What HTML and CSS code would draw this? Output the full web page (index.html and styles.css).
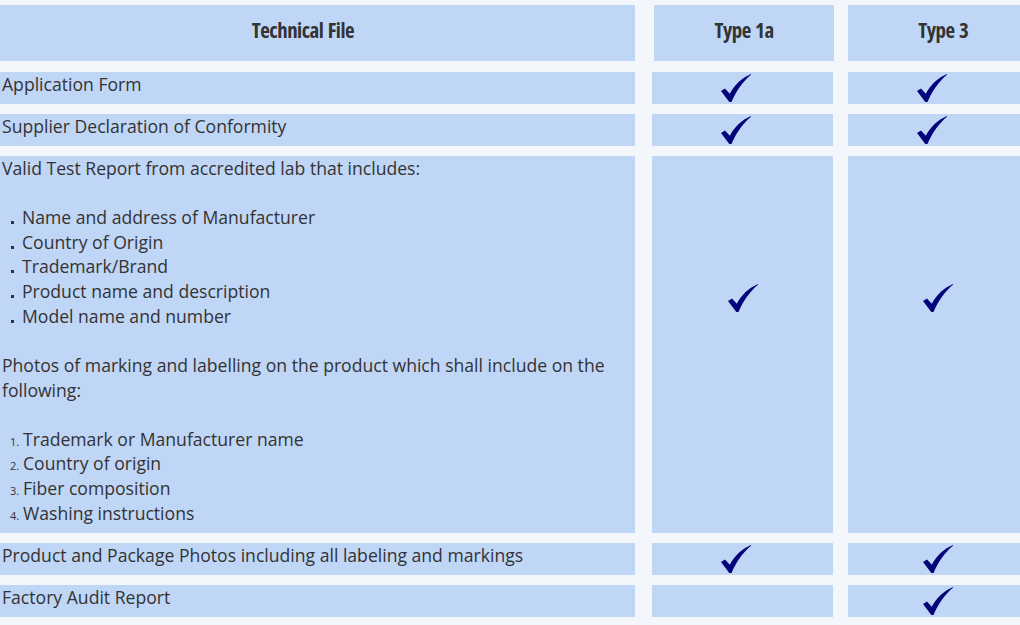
FILE: index.html
```html
<!DOCTYPE html>
<html lang="en">
<head>
<meta charset="utf-8">
<title>Technical File</title>
<link rel="stylesheet" href="styles.css">
</head>
<body>
<div class="table">
  <div class="cell head first"><span class="head-text">Technical File</span></div>
  <div class="cell head mid"><span class="head-text">Type 1a</span></div>
  <div class="cell head last"><span class="head-text">Type 3</span></div>

  <div class="cell text">Application Form</div>
  <div class="cell check mid"><svg class="tick" viewBox="0 0 30 28"><path d="M0 17 L4 14.5 L8.8 19.8 C13.5 11 20.5 4 30 0 L30 0.8 C22 7.5 15.5 16.5 10.5 28 L8.3 28 Z"/></svg></div>
  <div class="cell check"><svg class="tick" viewBox="0 0 30 28"><path d="M0 17 L4 14.5 L8.8 19.8 C13.5 11 20.5 4 30 0 L30 0.8 C22 7.5 15.5 16.5 10.5 28 L8.3 28 Z"/></svg></div>

  <div class="cell text">Supplier Declaration of Conformity</div>
  <div class="cell check mid"><svg class="tick" viewBox="0 0 30 28"><path d="M0 17 L4 14.5 L8.8 19.8 C13.5 11 20.5 4 30 0 L30 0.8 C22 7.5 15.5 16.5 10.5 28 L8.3 28 Z"/></svg></div>
  <div class="cell check"><svg class="tick" viewBox="0 0 30 28"><path d="M0 17 L4 14.5 L8.8 19.8 C13.5 11 20.5 4 30 0 L30 0.8 C22 7.5 15.5 16.5 10.5 28 L8.3 28 Z"/></svg></div>

  <div class="cell text">
    <p>Valid Test Report from accredited lab that includes:</p>
    <ul class="dots">
      <li>Name and address of Manufacturer</li>
      <li>Country of Origin</li>
      <li>Trademark/Brand</li>
      <li>Product name and description</li>
      <li>Model name and number</li>
    </ul>
    <p>Photos of marking and labelling on the product which shall include on the following:</p>
    <ol class="nums">
      <li>Trademark or Manufacturer name</li>
      <li>Country of origin</li>
      <li>Fiber composition</li>
      <li>Washing instructions</li>
    </ol>
  </div>
  <div class="cell check mid tall wide2"><svg class="tick" viewBox="0 0 30 28"><path d="M0 17 L4 14.5 L8.8 19.8 C13.5 11 20.5 4 30 0 L30 0.8 C22 7.5 15.5 16.5 10.5 28 L8.3 28 Z"/></svg></div>
  <div class="cell check tall wide3"><svg class="tick" viewBox="0 0 30 28"><path d="M0 17 L4 14.5 L8.8 19.8 C13.5 11 20.5 4 30 0 L30 0.8 C22 7.5 15.5 16.5 10.5 28 L8.3 28 Z"/></svg></div>

  <div class="cell text">Product and Package Photos including all labeling and markings</div>
  <div class="cell check mid"><svg class="tick" viewBox="0 0 30 28"><path d="M0 17 L4 14.5 L8.8 19.8 C13.5 11 20.5 4 30 0 L30 0.8 C22 7.5 15.5 16.5 10.5 28 L8.3 28 Z"/></svg></div>
  <div class="cell check wide3"><svg class="tick" viewBox="0 0 30 28"><path d="M0 17 L4 14.5 L8.8 19.8 C13.5 11 20.5 4 30 0 L30 0.8 C22 7.5 15.5 16.5 10.5 28 L8.3 28 Z"/></svg></div>

  <div class="cell text">Factory Audit Report</div>
  <div class="cell check mid"></div>
  <div class="cell check wide3"><svg class="tick" viewBox="0 0 30 28"><path d="M0 17 L4 14.5 L8.8 19.8 C13.5 11 20.5 4 30 0 L30 0.8 C22 7.5 15.5 16.5 10.5 28 L8.3 28 Z"/></svg></div>
</div>
</body>
</html>
```

FILE: styles.css
```css
html, body {
  margin: 0;
  padding: 0;
  background: #f3f6fb;
}

body {
  padding-top: 5px;
  font-family: "Open Sans", "DejaVu Sans", sans-serif;
  color: #333333;
}

.table {
  display: grid;
  grid-template-columns: 635px 183px 1fr;
  column-gap: 15px;
  row-gap: 10px;
}

.cell {
  background: #c0d6f6;
}

.cell.mid {
  margin-left: 2px;
}

.head {
  height: 56px;
  margin-bottom: 1px;
  display: flex;
  align-items: center;
  justify-content: center;
  padding-bottom: 8px;
  box-sizing: border-box;
}

.head.first {
  padding-right: 30px;
}

.head.mid {
  margin-left: 4px;
  margin-right: -1px;
}

.head.last {
  margin-right: -18px;
}

.head-text {
  display: inline-block;
  font-size: 22px;
  font-weight: 700;
  font-stretch: 75%;
  color: #333333;
  letter-spacing: -0.5px;
  word-spacing: 1px;
  transform: scaleX(0.95);
}

.text {
  font-size: 17.6px;
  line-height: 1.4;
  padding: 0 2px 7.36px 2px;
}

.text p {
  margin: 0 0 24.64px 0;
}

.text ul,
.text ol {
  list-style: none;
  margin: 0 0 24.64px 0;
  padding: 0 0 0 20px;
}

.text ol {
  margin-bottom: 0;
  counter-reset: num;
}

.dots li::before {
  content: "";
  display: inline-block;
  width: 3px;
  height: 3px;
  background: #333333;
  margin-left: -11px;
  margin-right: 8px;
}

.nums li {
  counter-increment: num;
}

.nums li::before {
  content: counter(num) ".";
  display: inline-block;
  width: 13px;
  margin-left: -12px;
  font-size: 11px;
  line-height: 1;
}

.check {
  padding: 2px 0 0 69px;
}

.check.wide2 {
  padding-left: 76px;
}

.check.wide3 {
  padding-left: 75px;
}

.check.tall {
  padding-top: 128px;
}

.tick {
  display: block;
  width: 30px;
  height: 28px;
  fill: #03037a;
}
```
